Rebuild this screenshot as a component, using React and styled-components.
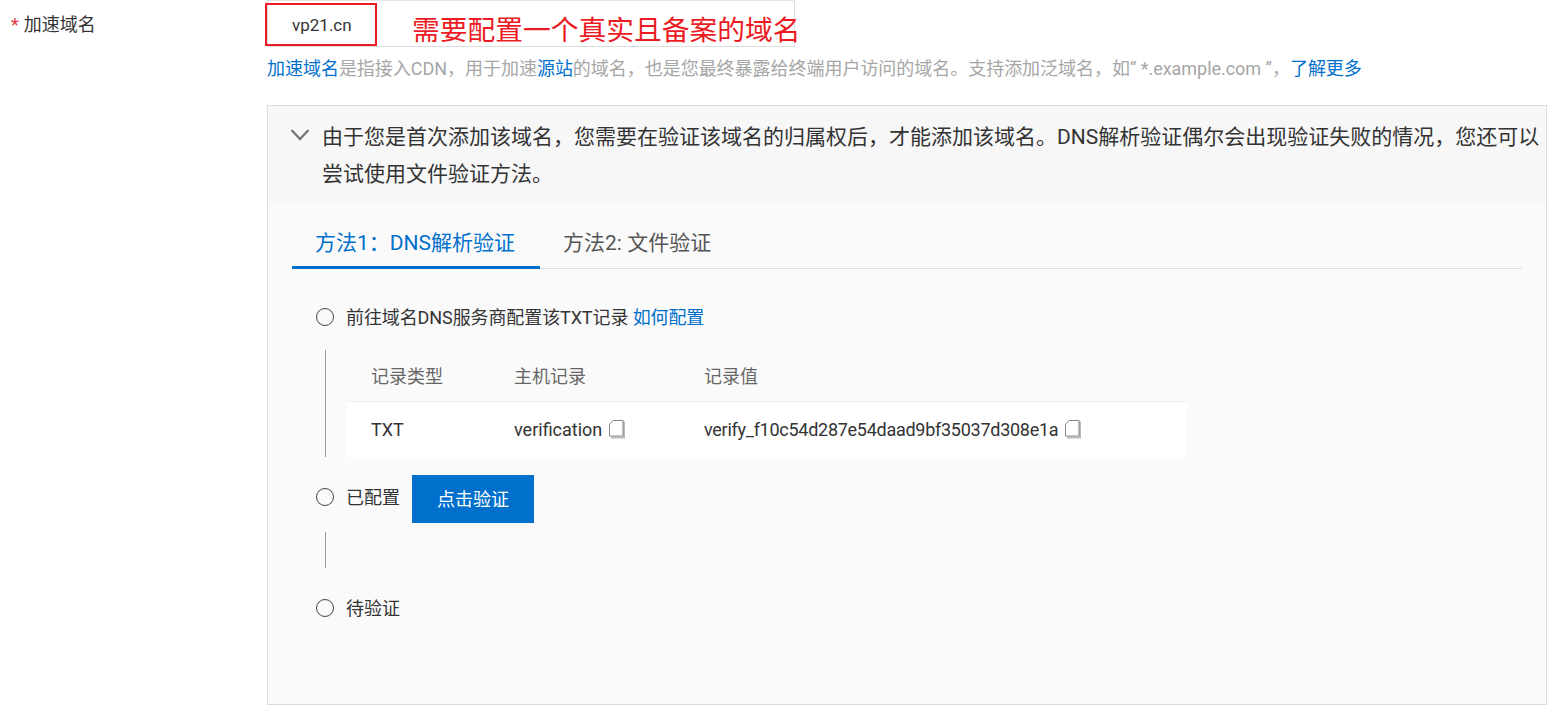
import React from 'react'
import styled, { createGlobalStyle } from 'styled-components'

const GlobalStyle = createGlobalStyle`
html, body {
  margin: 0;
  padding: 0;
  background: #fff;
}
body {
  font-family: Roboto, "Noto Sans CJK SC", sans-serif;
  color: #333;
  width: 1547px;
  height: 710px;
  overflow: hidden;
}
`

const Field = styled.div`
display: flex;
align-items: flex-start;
`
const Label = styled.div`
width: 267px;
flex: none;
padding: 13px 0 0 11px;
box-sizing: border-box;
font-size: 18px;
line-height: 24px;
color: #333;
`
const Star = styled.span`
color: #e4393c;
margin-right: 5px;
`
const Control = styled.div`
flex: 1;
min-width: 0;
`
const InputRow = styled.div`
position: relative;
width: 528px;
height: 47px;
box-sizing: border-box;
border: 1px solid #ddd;
border-top-color: #e6e6e6;
padding: 13px 0 0 24px;
font-size: 17px;
line-height: 22px;
color: #333;
`
const RedBox = styled.div`
position: absolute;
left: -3px;
top: 2px;
width: 112px;
height: 43px;
box-sizing: border-box;
border: 2px solid #ed1c24;
`
const Annotation = styled.div`
position: absolute;
left: 144px;
top: 12px;
font-size: 27.75px;
line-height: 36px;
white-space: nowrap;
color: #ed1c24;
`
const Help = styled.div`
margin-top: 9px;
font-size: 18px;
line-height: 26px;
letter-spacing: -0.03px;
color: #a6a6a6;
white-space: nowrap;
`
const Link = styled.a`
color: #0070cc;
text-decoration: none;
`
const Panel = styled.div`
margin-top: 23px;
height: 600px;
box-sizing: border-box;
border: 1px solid #ddd;
background: #fafafa;
`
const Notice = styled.div`
display: flex;
height: 97px;
background: #f7f7f7;
box-sizing: border-box;
padding: 13px 0 0 22px;
`
const Chevron = styled.svg`
width: 20px;
height: 14px;
flex: none;
margin: 9px 12px 0 0;
`
const NoticeText = styled.div`
font-size: 21px;
line-height: 37px;
color: #333;
`
const Tabs = styled.div`
display: flex;
margin: 1px 24px 0;
height: 65px;
box-sizing: border-box;
border-bottom: 1px solid #ddd;
`
const Tab = styled.div`
height: 65px;
box-sizing: border-box;
padding: 24px 25px 0 23px;
font-size: 21px;
line-height: 30px;
white-space: nowrap;
color: ${p => (p.$active ? '#0070cc' : '#555')};
border-bottom: 3px solid ${p => (p.$active ? '#0070cc' : 'transparent')};
`
const Steps = styled.div`
padding: 35px 0 0 48px;
`
const StepRow = styled.div`
display: flex;
align-items: center;
height: ${p => p.$height}px;
margin-top: ${p => p.$top || 0}px;
font-size: 18px;
color: #333;
`
const Dot = styled.span`
width: 18px;
height: 18px;
flex: none;
box-sizing: border-box;
border: 1.5px solid #444;
border-radius: 50%;
margin-right: 12px;
`
const StepText = styled.span`
padding-bottom: 2px;
letter-spacing: ${p => p.$tracking || 0}px;
`
const StepBody = styled.div`
margin-left: 9px;
padding-left: 20px;
border-left: 1px solid #999;
height: ${p => p.$height}px;
margin-top: ${p => p.$top || 0}px;
margin-bottom: ${p => p.$bottom || 0}px;
`
const Table = styled.div`
width: 840px;
margin-left: 1px;
font-size: 18px;
`
const TableRow = styled.div`
display: grid;
grid-template-columns: 143px 190px 1fr;
align-items: center;
box-sizing: border-box;
padding: 0 0 1px 24px;
height: ${p => p.$height}px;
background: ${p => (p.$head ? 'transparent' : '#fff')};
border-bottom: ${p => (p.$head ? '1px solid #eee' : 'none')};
color: ${p => (p.$head ? '#666' : '#333')};
`
const CopyValue = styled.div`
display: flex;
align-items: center;
gap: 6px;
white-space: nowrap;
letter-spacing: ${p => p.$tracking || 0}px;
`
const CopyGlyph = styled.svg`
width: 18px;
height: 20px;
flex: none;
`
const VerifyButton = styled.button`
width: 122px;
height: 48px;
margin: 4px 0 0 12px;
border: none;
padding: 0 0 2px;
background: #0070cc;
color: #fff;
font: inherit;
font-size: 18px;
`

const CopyIcon = () => (
  <CopyGlyph viewBox="0 0 18 20" fill="none">
    <path d="M16 2.5V18.5H3" stroke="#bbb" strokeWidth="2" />
    <path d="M5 1.5H15V17H1.5V5Z" fill="#fff" stroke="#888" />
  </CopyGlyph>
)

export default function App() {
  return (
    <>
      <GlobalStyle />
      <Field>
        <Label><Star>*</Star>加速域名</Label>
        <Control>
          <InputRow>
            vp21.cn
            <RedBox />
            <Annotation>需要配置一个真实且备案的域名</Annotation>
          </InputRow>
          <Help>
            <Link>加速域名</Link>是指接入CDN，用于加速<Link>源站</Link>的域名，也是您最终暴露给终端用户访问的域名。支持添加泛域名，如“ *.example.com ”，<Link>了解更多</Link>
          </Help>
          <Panel>
            <Notice>
              <Chevron viewBox="0 0 20 14" fill="none">
                <path d="M1.5 2L10 11L18.5 2" stroke="#777" strokeWidth="2.4" />
              </Chevron>
              <NoticeText>由于您是首次添加该域名，您需要在验证该域名的归属权后，才能添加该域名。DNS解析验证偶尔会出现验证失败的情况，您还可以尝试使用文件验证方法。</NoticeText>
            </Notice>
            <Tabs>
              <Tab $active>方法1：DNS解析验证</Tab>
              <Tab>方法2: 文件验证</Tab>
            </Tabs>
            <Steps>
              <StepRow $height={26}>
                <Dot />
                <StepText $tracking={-0.1}>前往域名DNS服务商配置该TXT记录 <Link>如何配置</Link></StepText>
              </StepRow>
              <StepBody $height={107} $top={20}>
                <Table>
                  <TableRow $head $height={52}>
                    <span>记录类型</span>
                    <span>主机记录</span>
                    <span>记录值</span>
                  </TableRow>
                  <TableRow $height={55}>
                    <span>TXT</span>
                    <CopyValue>verification <CopyIcon /></CopyValue>
                    <CopyValue $tracking={-0.27}>verify_f10c54d287e54daad9bf35037d308e1a <CopyIcon /></CopyValue>
                  </TableRow>
                </Table>
              </StepBody>
              <StepRow $height={48} $top={16}>
                <Dot />
                <StepText>已配置</StepText>
                <VerifyButton>点击验证</VerifyButton>
              </StepRow>
              <StepBody $height={36} $top={11} $bottom={27} />
              <StepRow $height={26}>
                <Dot />
                <StepText>待验证</StepText>
              </StepRow>
            </Steps>
          </Panel>
        </Control>
      </Field>
    </>
  )
}
